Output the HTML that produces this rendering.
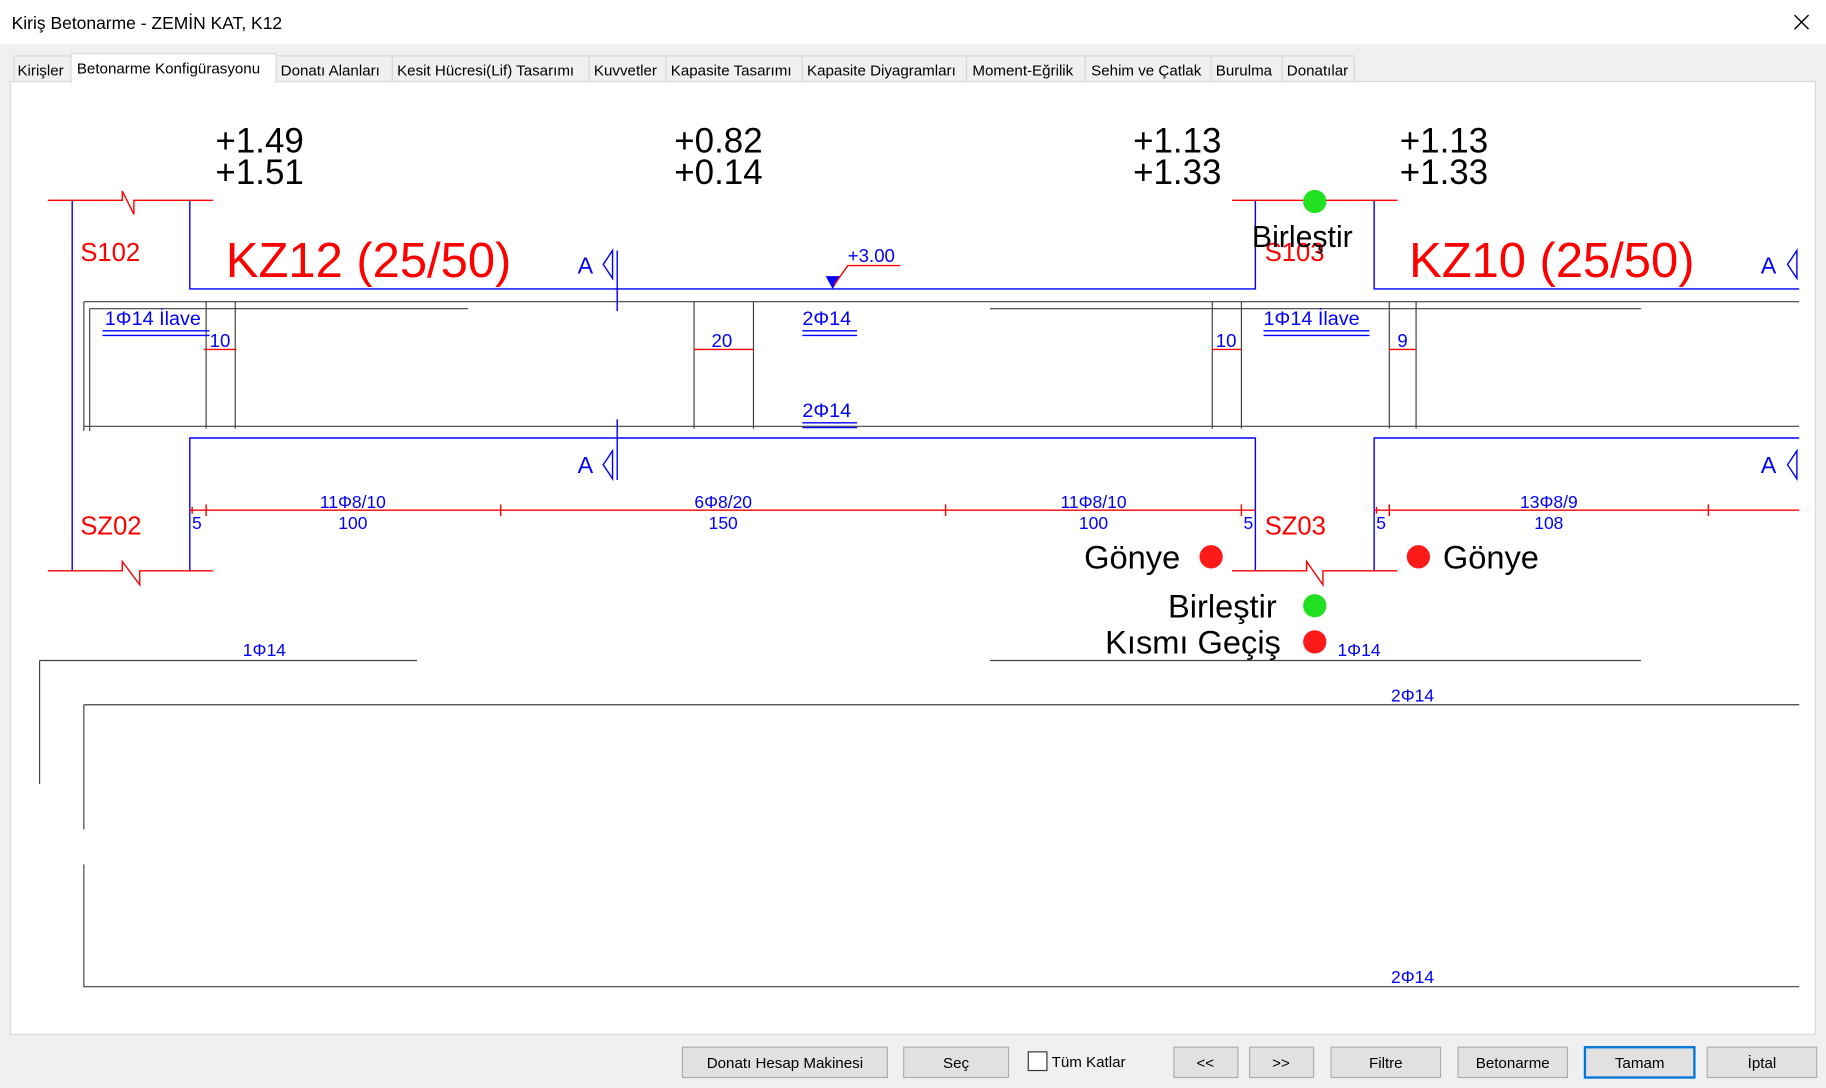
<!DOCTYPE html>
<html><head><meta charset="utf-8"><style>
html,body{margin:0;padding:0;background:#f0f0f0;overflow:hidden}
svg{display:block}
.ui{font-family:"Liberation Sans",sans-serif;font-size:13px;fill:#000}
.b{fill:#0000ff;font-family:"Liberation Sans",sans-serif}
.r{fill:#ff0000;font-family:"Liberation Sans",sans-serif}
.k{fill:#000;font-family:"Liberation Sans",sans-serif}
</style></head><body>
<svg width="1826" height="1088" viewBox="0 0 1568 934" preserveAspectRatio="none" xmlns="http://www.w3.org/2000/svg">
<rect x="0" y="0" width="1568" height="934" fill="#f0f0f0"/>
<rect x="0" y="0" width="1568" height="38" fill="#fff"/>
<text x="10" y="25" class="ui" style="font-size:15px">Kiriş Betonarme - ZEMİN KAT, K12</text>
<path d="M1541 13 L1553 25 M1553 13 L1541 25" stroke="#000" stroke-width="1.2"/>
<!-- tabs -->
<g class="ui" stroke="#d9d9d9">
<rect x="12" y="48" width="49" height="22" fill="#f0f0f0"/>
<rect x="237" y="48" width="100" height="22" fill="#f0f0f0"/>
<rect x="337" y="48" width="169" height="22" fill="#f0f0f0"/>
<rect x="506" y="48" width="66" height="22" fill="#f0f0f0"/>
<rect x="572" y="48" width="117" height="22" fill="#f0f0f0"/>
<rect x="689" y="48" width="141" height="22" fill="#f0f0f0"/>
<rect x="830" y="48" width="102" height="22" fill="#f0f0f0"/>
<rect x="932" y="48" width="108" height="22" fill="#f0f0f0"/>
<rect x="1040" y="48" width="61" height="22" fill="#f0f0f0"/>
<rect x="1101" y="48" width="62" height="22" fill="#f0f0f0"/>
</g>
<rect x="9" y="70" width="1550" height="818" fill="#fff" stroke="#d9d9d9"/>
<rect x="61" y="46" width="176" height="25" fill="#fff" stroke="#d9d9d9"/>
<rect x="62" y="68" width="174" height="4" fill="#fff"/>
<g class="ui" textLength="0">
<text x="15" y="65">Kirişler</text>
<text x="66" y="63">Betonarme Konfigürasyonu</text>
<text x="241" y="65">Donatı Alanları</text>
<text x="341" y="65">Kesit Hücresi(Lif) Tasarımı</text>
<text x="510" y="65">Kuvvetler</text>
<text x="576" y="65">Kapasite Tasarımı</text>
<text x="693" y="65">Kapasite Diyagramları</text>
<text x="835" y="65">Moment-Eğrilik</text>
<text x="937" y="65">Sehim ve Çatlak</text>
<text x="1044" y="65">Burulma</text>
<text x="1105" y="65">Donatılar</text>
</g>
<!-- gray rebar -->
<g stroke="#404040" stroke-width="1" fill="none">
<path d="M72 259 H1545 M72 366 H1545 M72 259 V370 M77 265 V370 M77 265 H402 M850 265 H1409"/>
<path d="M177 259 V368 M202 259 V368 M596 259 V368 M647 259 V368 M1041 259 V368 M1066 259 V368 M1193 259 V368 M1216 259 V368"/>
<path d="M34 567 H358 M34 567 V673 M850 567 H1409 M72 605 H1545 M72 605 V712 M72 742 V847 H1545"/>
</g>
<!-- blue structure -->
<g stroke="#0000ff" stroke-width="1.2" fill="none">
<path d="M62 172 V490 M163 172 V248 H1078 V172 M163 490 V376 H1078 V490 M1180 172 V248 H1545 M1180 490 V376 H1545"/>
<path d="M530 215 V267 M530 360 V412"/>
<path d="M526 215 L518 227 L526 239 Z M526 387 L518 399 L526 411 Z M1543 215 L1535 227 L1543 239 Z M1543 387 L1535 399 L1543 411 Z"/>
<path d="M88 284 H180 M88 288 H180 M689 284 H736 M689 288 H736 M1085 284 H1176 M1085 288 H1176 M689 363 H736 M689 367 H736"/>
</g>
<path d="M709 237 L722 237 L715 248 Z" fill="#0000ff"/>
<!-- red -->
<g stroke="#ff0000" stroke-width="1.2" fill="none">
<path d="M41 172 H105 V164 L115 184 V172 H183"/>
<path d="M41 490 H105 V482 L120 502 V490 H183"/>
<path d="M1058 172 H1200"/>
<path d="M1058 490 H1122 V482 L1136 502 V490 H1200"/>
<path d="M773 228 H728 L716 245"/>
<path d="M175 300 H203 M596 300 H647 M1041 300 H1066 M1193 300 H1216"/>
<path d="M163 438 H1078 M1180 438 H1545"/>
<path d="M177 433 V443 M430 433 V443 M812 433 V443 M1066 433 V443 M1193 433 V443 M1467 433 V443 M165 435 V441 M1182 435 V441"/>
</g>
<!-- texts -->
<g class="k" style="font-size:30px">
<text x="185" y="131">+1.49</text><text x="185" y="158">+1.51</text>
<text x="579" y="131">+0.82</text><text x="579" y="158">+0.14</text>
<text x="973" y="131">+1.13</text><text x="973" y="158">+1.33</text>
<text x="1202" y="131">+1.13</text><text x="1202" y="158">+1.33</text>
</g>
<g class="r">
<text x="69" y="224" style="font-size:22px">S102</text>
<text x="69" y="459" style="font-size:22px">SZ02</text>
<text x="1086" y="459" style="font-size:22px">SZ03</text>
<text x="1086" y="224" style="font-size:22px">S103</text>
<text x="194" y="238" style="font-size:42px">KZ12 (25/50)</text>
<text x="1210" y="238" style="font-size:42px">KZ10 (25/50)</text>
</g>
<text x="1075" y="212" class="k" style="font-size:26px">Birleştir</text>
<circle cx="1129" cy="173" r="10" fill="#22e022"/>
<g class="b" style="font-size:20px">
<text x="496" y="235">A</text><text x="496" y="406">A</text>
<text x="1512" y="235">A</text><text x="1512" y="406">A</text>
</g>
<g class="b" style="font-size:16px">
<text x="728" y="225">+3.00</text>
<text x="90" y="279" style="font-size:17px">1Φ14 İlave</text>
<text x="1085" y="279" style="font-size:17px">1Φ14 İlave</text>
<text x="689" y="279" style="font-size:17px">2Φ14</text>
<text x="689" y="358" style="font-size:17px">2Φ14</text>
<text x="180" y="298">10</text><text x="611" y="298">20</text>
<text x="1044" y="298">10</text><text x="1200" y="298">9</text>
</g>
<g class="b" style="font-size:15px" text-anchor="middle">
<text x="303" y="436">11Φ8/10</text><text x="303" y="454">100</text>
<text x="621" y="436">6Φ8/20</text><text x="621" y="454">150</text>
<text x="939" y="436">11Φ8/10</text><text x="939" y="454">100</text>
<text x="1330" y="436">13Φ8/9</text><text x="1330" y="454">108</text>
<text x="169" y="454">5</text><text x="1072" y="454">5</text><text x="1186" y="454">5</text>
<text x="227" y="563">1Φ14</text><text x="1167" y="563">1Φ14</text>
<text x="1213" y="602">2Φ14</text><text x="1213" y="844">2Φ14</text>
</g>
<g class="k" style="font-size:28px">
<text x="931" y="488">Gönye</text>
<text x="1239" y="488">Gönye</text>
<text x="1003" y="530">Birleştir</text>
<text x="949" y="561">Kısmı Geçiş</text>
</g>
<circle cx="1040" cy="478" r="10" fill="#ff1a1a"/>
<circle cx="1218" cy="478" r="10" fill="#ff1a1a"/>
<circle cx="1129" cy="520" r="10" fill="#22e022"/>
<circle cx="1129" cy="551" r="10" fill="#ff1a1a"/>
<!-- buttons -->
<g fill="#e1e1e1" stroke="#adadad">
<rect x="586" y="899" width="176" height="26"/>
<rect x="776" y="899" width="90" height="26"/>
<rect x="1008" y="899" width="55" height="26"/>
<rect x="1073" y="899" width="55" height="26"/>
<rect x="1143" y="899" width="94" height="26"/>
<rect x="1252" y="899" width="94" height="26"/>
<rect x="1466" y="899" width="94" height="26"/>
</g>
<rect x="1361" y="899" width="94" height="26" fill="#e1e1e1" stroke="#0078d7" stroke-width="2"/>
<rect x="883" y="903" width="16" height="16" fill="#fff" stroke="#333"/>
<g class="ui" text-anchor="middle">
<text x="674" y="917">Donatı Hesap Makinesi</text>
<text x="821" y="917">Seç</text>
<text x="1035" y="917">&lt;&lt;</text>
<text x="1100" y="917">&gt;&gt;</text>
<text x="1190" y="917">Filtre</text>
<text x="1299" y="917">Betonarme</text>
<text x="1408" y="917">Tamam</text>
<text x="1513" y="917">İptal</text>
</g>
<text x="903" y="916" class="ui">Tüm Katlar</text>
</svg>
</body></html>
